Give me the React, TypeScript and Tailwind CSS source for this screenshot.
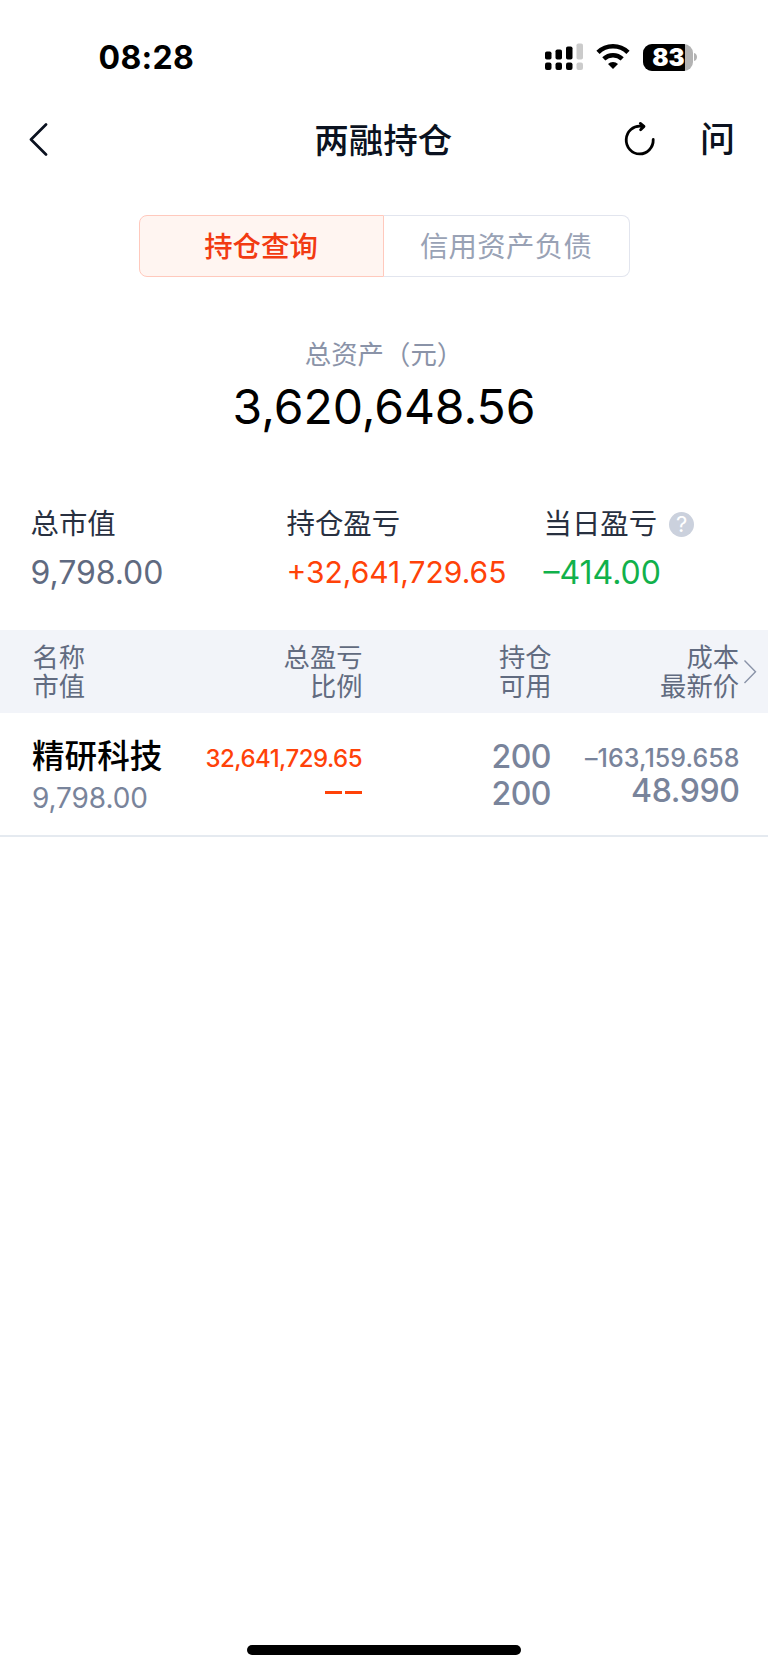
interface Stat {
  label: string;
  value: string;
  help?: boolean;
  labelClass: string;
  valueClass: string;
}

const stats: Stat[] = [
  { label: '总市值', value: '9,798.00', labelClass: 'w-[256px]', valueClass: 'text-[32px] tracking-[-0.05px] text-[#5f6a80] pt-px' },
  { label: '持仓盈亏', value: '+32,641,729.65', labelClass: 'w-[257px]', valueClass: 'text-[30px] text-[#ff4208]' },
  { label: '当日盈亏', value: '–414.00', help: true, labelClass: 'w-[200px]', valueClass: 'text-[32px] text-[#11b14b] pt-px' },
];

const StatusBar = () => (
  <div className="flex h-[114px] items-start justify-between pl-[98.5px] pr-[70px] pt-[37px]">
    <div className="pt-px text-[32px] font-bold leading-[40px] tracking-[0.3px] text-black">08:28</div>
    <div className="flex h-[40px] items-center">
      {/* dual sim signal */}
      <svg width="38" height="28" viewBox="0 0 38 28" className="mr-[13px]">
        <rect x="0" y="8.5" width="6.5" height="8" rx="1.8" />
        <rect x="10.5" y="6.5" width="6.5" height="10" rx="1.8" />
        <rect x="21" y="3.5" width="6.5" height="13" rx="1.8" />
        <rect x="31.5" y="0.5" width="6.5" height="16" rx="1.8" fill="#cbcbcb" />
        <rect x="0" y="19.5" width="6.5" height="7.5" rx="2" />
        <rect x="10.5" y="19.5" width="6.5" height="7.5" rx="2" />
        <rect x="21" y="19.5" width="6.5" height="7.5" rx="2" />
        <rect x="31.5" y="19.5" width="6.5" height="7.5" rx="2" fill="#cbcbcb" />
      </svg>
      <svg width="34" height="28" viewBox="0 0 34 28" className="mr-[12.5px]">
        <path d="M2 9.4 A21.5 21.5 0 0 1 32 9.4" fill="none" stroke="#000" strokeWidth="4.6" />
        <path d="M7.8 15.8 A13.4 13.4 0 0 1 26.2 15.8" fill="none" stroke="#000" strokeWidth="4.5" />
        <path d="M17 25.9 L12 20.9 A7.2 7.2 0 0 1 22 20.9 Z" />
      </svg>
      <div className="flex h-[27px] w-[50px] overflow-hidden rounded-[9px] bg-[#b3b3b3]">
        <div className="flex w-[42px] justify-end bg-black text-[24px] font-black leading-[27px] text-white">83</div>
      </div>
      <svg width="4" height="10" viewBox="0 0 4 10" className="ml-[1.5px]">
        <path d="M0 1 C4 2 4 8 0 9 Z" fill="#b3b3b3" />
      </svg>
    </div>
  </div>
);

const NavBar = () => (
  <div className="flex h-[50px] items-center justify-between pl-[27.5px] pr-[36px] text-[#0b1220]">
    <svg width="117" height="34" viewBox="0 0 117 34" fill="none" stroke="currentColor" strokeWidth="2.7" strokeLinecap="round" strokeLinejoin="round">
      <path d="M18 2.5 L3 17.5 L18 32.5" />
    </svg>
    <h1 className="pt-[3px] text-[34.5px] font-medium leading-[50px]">两融持仓</h1>
    <div className="flex items-center">
      <svg width="34" height="36" viewBox="0 0 34 36" fill="none" stroke="#000" strokeWidth="2.8" strokeLinecap="round" strokeLinejoin="round" className="mr-[44px]">
        <path d="M31.2 18.5 A13.5 13.9 0 1 1 19 5.2" />
        <path d="M18.3 2.4 L22 5.4 L18.6 8.8" fill="#000" />
      </svg>
      <span className="w-[32px] text-[35px] font-medium leading-[50px]">问</span>
    </div>
  </div>
);

const Tabs = () => (
  <div className="mx-auto mt-[51px] flex h-[62px] w-[491px] text-[28.4px] leading-[61px]">
    <div className="w-[245px] rounded-l-[8px] border-[1.5px] border-[#ffc9bd] bg-[#fff5f1] text-center font-medium text-[#f23a12]">持仓查询</div>
    <div className="flex-1 rounded-r-[8px] border-[1.5px] border-l-0 border-[#e2e5ee] text-center tracking-[0.3px] text-[#99a2b5]">信用资产负债</div>
  </div>
);

const Holding = () => (
  <div className="flex h-[123.5px] border-b-2 border-[#e5eaf0] pl-[32px] pr-[28.5px] pt-[20px]">
    <div className="w-[150px]">
      <div className="whitespace-nowrap text-[32.6px] font-medium leading-[46px] text-black">精研科技</div>
      <div className="text-[28px] leading-[38px] tracking-[-0.1px] text-[#79849b]">9,798.00</div>
    </div>
    <div className="flex w-[180px] flex-col items-end text-[#ff4208]">
      <div className="pt-[6px] text-[24px] font-medium leading-[40px] tracking-[-0.5px]">32,641,729.65</div>
      <div className="flex gap-[3px] pt-[12px]">
        <span className="h-[3px] w-[17px] bg-[#ff4208]" />
        <span className="h-[3px] w-[17px] bg-[#ff4208]" />
      </div>
    </div>
    <div className="w-[189px] pt-[5px] text-right text-[32px] font-medium leading-[37px] tracking-[-0.5px] text-[#79849b]">
      <div>200</div>
      <div>200</div>
    </div>
    <div className="flex-1 pt-[5px] text-right font-medium text-[#79849b]">
      <div className="text-[25px] leading-[40px] tracking-[0.05px]">–163,159.658</div>
      <div className="pt-px text-[32px] leading-[24px] tracking-[-0.4px]">48.990</div>
    </div>
  </div>
);

export default function App() {
  return (
    <div className="flex h-[1669px] w-[768px] flex-col bg-white font-['Inter','Noto_Sans_CJK_SC',sans-serif]">
      <StatusBar />
      <NavBar />
      <Tabs />

      <div className="mt-[57px] flex flex-col items-center">
        <div className="text-[26.4px] leading-[40px] text-[#8a93a8]">总资产（元）</div>
        <div className="mt-[3px] text-[48px] leading-[60px] tracking-[-0.05px] text-black">3,620,648.56</div>
      </div>

      <div className="mt-[67px] flex h-[126px] pl-[30.5px]">
        {stats.map(s => (
          <div key={s.label} className={s.labelClass}>
            <div className="flex h-[40px] items-center text-[28.4px] leading-[40px] text-[#283040]">
              {s.label}
              {s.help && (
                <span className="ml-[12px] flex size-[25px] items-center justify-center rounded-full bg-[#cbd1dd] text-[22px] leading-[25px] text-white">?</span>
              )}
            </div>
            <div className={`mt-[7.5px] whitespace-nowrap leading-[40px] ${s.valueClass}`}>{s.value}</div>
          </div>
        ))}
      </div>

      <div className="flex h-[83px] bg-[#f2f4f9] pl-[32.5px] pr-[10px] pt-[12.5px] text-[26.3px] leading-[29.5px] text-[#616b80]">
        <div className="w-[150px]">名称<br />市值</div>
        <div className="w-[180px] text-right">总盈亏<br />比例</div>
        <div className="w-[189px] text-right">持仓<br />可用</div>
        <div className="flex-1 text-right">成本<br />最新价</div>
        <svg width="19" height="26" viewBox="0 0 19 26" fill="none" stroke="#8a93a8" strokeWidth="1.4" className="mt-[16px]">
          <path d="M5.5 1.5 L16.5 12.7 L5.5 24" />
        </svg>
      </div>
      <Holding />

      <div className="mx-auto mb-[14px] mt-auto h-[10px] w-[274px] rounded-full bg-black" />
    </div>
  );
}
